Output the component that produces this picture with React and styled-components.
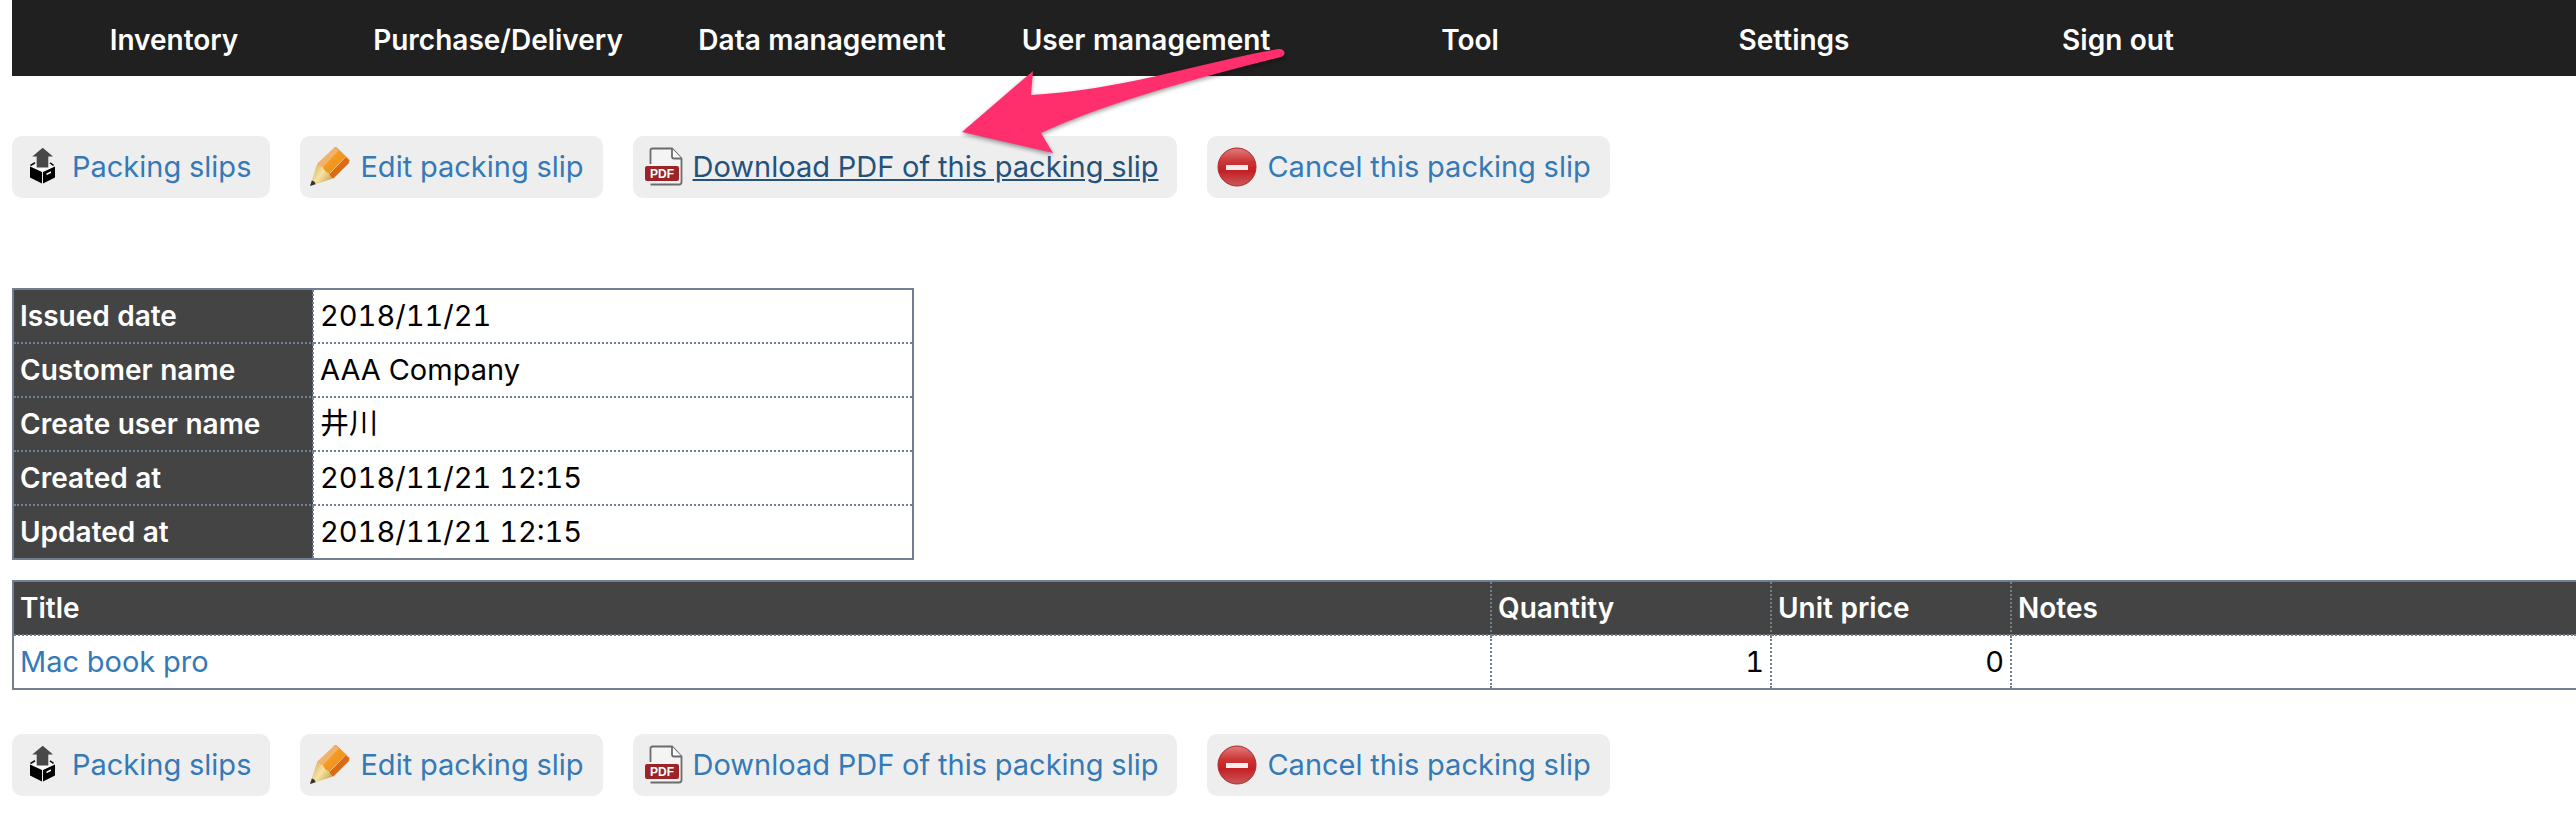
import React from 'react';
import styled, { createGlobalStyle } from "styled-components"

const menu = ['Inventory', 'Purchase/Delivery', 'Data management', 'User management', 'Tool', 'Settings', 'Sign out']

const details = [
  ['Issued date', '2018/11/21'],
  ['Customer name', 'AAA Company'],
  ['Create user name', '井川'],
  ['Created at', '2018/11/21 12:15'],
  ['Updated at', '2018/11/21 12:15'],
]

const items = [
  { title: 'Mac book pro', quantity: 1, price: 0, notes: '' },
]

function BoxIcon() {
  return (
    <Icon viewBox="0 0 40 40" aria-hidden="true">
      <path d="M8.5 18.5 L13 15.8 M31.5 18.5 L28 15.8" stroke="#111" strokeWidth="1.6" fill="none" />
      <path d="M14 17 L28 17 L32 20 L20.5 25 L9 20 Z" fill="#fafafa" />
      <path d="M20.7 .7 L31 9.5 H26.3 V20.5 H14.7 V9.5 H10.3 Z" fill="#484848" />
      <path d="M8 19.5 L20 25 V36.5 L8 30.5 Z M33 19.5 L21 25 V36.5 L33 30.5 Z" fill="#000" />
      <path d="M24.5 26.5 L29 24.2 V26 L24.5 28.3 Z" fill="#fff" />
    </Icon>
  )
}

function PencilIcon({ id }) {
  return (
    <Icon viewBox="0 0 40 40" aria-hidden="true">
      <defs>
        <linearGradient id={`${id}-wood`} x1="0" y1=".3" x2="1" y2="1">
          <stop offset="0" stopColor="#d9b45c" />
          <stop offset=".4" stopColor="#f6e3a6" />
          <stop offset="1" stopColor="#b98a2c" />
        </linearGradient>
        <linearGradient id={`${id}-body`} x1="0" y1="0" x2="1" y2="1">
          <stop offset="0" stopColor="#f6a62c" />
          <stop offset="1" stopColor="#ef8a12" />
        </linearGradient>
      </defs>
      <path d="M7.3 16.5 L0 39 L23.7 31.3 L22 25 L14 19 Z" fill={`url(#${id}-wood)`} />
      <path d="M1.8 33.5 L0 39 L5.6 37.2 Q5 34 1.8 33.5 Z" fill="#333" />
      <path d="M7.3 16.5 L24 .8 Q25.6 0 27 1 L30 3.5 L13.5 20 Q9 20 7.3 16.5 Z" fill="#f3b269" />
      <path d="M13 20 L29 3 L36 9.5 L20 26.5 Q14 25 13 20 Z" fill={`url(#${id}-body)`} />
      <path d="M19.5 26 L35.5 9 L39.6 13.3 L38.5 16.5 L23.7 31.3 Q19.5 30 19.5 26 Z" fill="#dc6a14" />
      <path d="M20 26 L36 9.5" stroke="#fbd08a" strokeWidth="1" />
      <path d="M24 1 Q25.6 0 27 1 L39.6 13.3" stroke="#e9a15b" strokeWidth="1" fill="none" />
    </Icon>
  )
}

function PdfIcon() {
  return (
    <Icon viewBox="0 0 40 40" aria-hidden="true">
      <path d="M7 2 H29 L38 12 V37 H7 Z" fill="#f4f4f4" />
      <path d="M7.5 17 V3 Q7.5 1.5 9.5 1.5 H29 L38.5 11.5 V35 Q38.5 37.5 36 37.5 H7.5" fill="none" stroke="#6b6b6b" strokeWidth="1.8" />
      <path d="M29 1.5 V9.5 Q29 11.5 31 11.5 H38.5" fill="#fff" stroke="#6b6b6b" strokeWidth="1.8" />
      <rect x="2" y="19" width="34" height="15" rx="2" fill="#9c2426" />
      <text x="19" y="31" textAnchor="middle" fontFamily="Liberation Sans" fontWeight="700" fontSize="12" fill="#fff">PDF</text>
    </Icon>
  )
}

function CancelIcon({ id }) {
  return (
    <Icon viewBox="0 0 40 40" aria-hidden="true">
      <defs>
        <linearGradient id={`${id}-red`} x1="0" y1="0" x2="0" y2="1">
          <stop offset="0" stopColor="#e07d7d" />
          <stop offset=".35" stopColor="#cc3636" />
          <stop offset=".6" stopColor="#c51f24" />
          <stop offset="1" stopColor="#c9595b" />
        </linearGradient>
      </defs>
      <circle cx="20" cy="20" r="19" fill={`url(#${id}-red)`} stroke="#a92a2c" strokeWidth="1" />
      <rect x="9" y="18" width="22" height="5" fill="#f6eeee" />
    </Icon>
  )
}

function Arrow() {
  return (
    <ArrowSvg viewBox="0 0 336 124" aria-hidden="true">
      <path d="M6 92 L77 31 L75 55 C165 50 235 25 322 9 C329 8 331 15 325 17 C240 38 150 63 85 93 L97 113 Z" fill="#ff2f6e" />
    </ArrowSvg>
  )
}

function Actions({ id, pointed }) {
  return (
    <ActionBar>
      <Action href="#slips"><BoxIcon />Packing slips</Action>
      <Action href="#edit"><PencilIcon id={`${id}-edit`} />Edit packing slip</Action>
      <Pointed>
        <Action href="#pdf" $active={pointed}><PdfIcon /><span>Download PDF of this packing slip</span></Action>
        { pointed && <Arrow /> }
      </Pointed>
      <Action href="#cancel"><CancelIcon id={`${id}-cancel`} />Cancel this packing slip</Action>
    </ActionBar>
  )
}

function App() {
  return (
    <Page>
      <GlobalStyle />
      <Nav>
        { menu.map((name) => <NavLink href="#menu" key={name}>{name}</NavLink>) }
      </Nav>
      <Actions id="top" pointed />
      <DetailTable>
        <tbody>
          { details.map(([label, value]) => (
            <tr key={label}>
              <Th scope="row" $width="300px">{label}</Th>
              <Td>{value}</Td>
            </tr>
          )) }
        </tbody>
      </DetailTable>
      <ItemTable>
        <thead>
          <tr>
            <Th scope="col" $width="1478px">Title</Th>
            <Th scope="col" $width="280px">Quantity</Th>
            <Th scope="col" $width="240px">Unit price</Th>
            <Th scope="col">Notes</Th>
          </tr>
        </thead>
        <tbody>
          { items.map((item) => (
            <tr key={item.title}>
              <Td><a href="#item">{item.title}</a></Td>
              <Td $right>{item.quantity}</Td>
              <Td $right>{item.price}</Td>
              <Td>{item.notes}</Td>
            </tr>
          )) }
        </tbody>
      </ItemTable>
      <Actions id="bottom" />
    </Page>
  )
}

export default App;

const GlobalStyle = createGlobalStyle`
    body{
      margin:0;
      background:#fff;
      color:#000;
      font-family:Inter, "Noto Sans CJK JP", sans-serif;
      font-size:29px;
      font-variant-numeric:tabular-nums;
      line-height:40px;
    }
    a{
      color:#337ab7;
      text-decoration:none;
    }
`
const Page = styled.div`
    padding-left:12px;
    overflow-x:hidden;
`
const Nav = styled.nav`
    display:flex;
    height:76px;
    background-color:#202020;
`
const NavLink = styled.a`
    flex:0 0 324px;
    line-height:80px;
    text-align:center;
    font-size:28px;
    font-weight:600;
    && {
      color:white;
    }
`
const ActionBar = styled.div`
    display:flex;
    gap:30px;
    padding:60px 0 28px;
`
const Action = styled.a`
    display:flex;
    align-items:center;
    gap:10px;
    height:62px;
    box-sizing:border-box;
    padding:0 19px 0 10px;
    border-radius:10px;
    background-color:#eee;
    white-space:nowrap;
    && {
      color:${(props) => props.$active ? '#23527c' : '#337ab7'};
    }
    span{
      text-decoration:${(props) => props.$active ? 'underline' : 'none'};
    }
`
const Pointed = styled.div`
    position:relative;
`
const Icon = styled.svg`
    flex:none;
    width:40px;
    height:40px;
`
const ArrowSvg = styled.svg`
    position:absolute;
    left:323px;
    top:-96px;
    width:336px;
    height:124px;
    pointer-events:none;
    filter:drop-shadow(0 2px 2px rgba(0,0,0,.4));
`
const Table = styled.table`
    border-collapse:collapse;
    border:2px solid #708090;
`
const DetailTable = styled(Table)`
    width:902px;
    margin-top:62px;
    table-layout:fixed;
`
const ItemTable = styled(Table)`
    width:100%;
    margin:20px 0 -16px;
    table-layout:fixed;
    border-right:0;
`
const Th = styled.th`
    box-sizing:border-box;
    width:${(props) => props.$width || 'auto'};
    padding:6px;
    border:2px dotted #708090;
    background-color:#444;
    color:white;
    font-size:28px;
    font-weight:600;
    text-align:left;
    ${ItemTable} tr > &:last-child {
      border-right:0;
    }
`
const Td = styled.td`
    padding:6px;
    border:2px dotted #708090;
    background-color:#fff;
    text-align:${(props) => props.$right ? 'right' : 'left'};
    ${ItemTable} tr > &:last-child {
      border-right:0;
    }
`
